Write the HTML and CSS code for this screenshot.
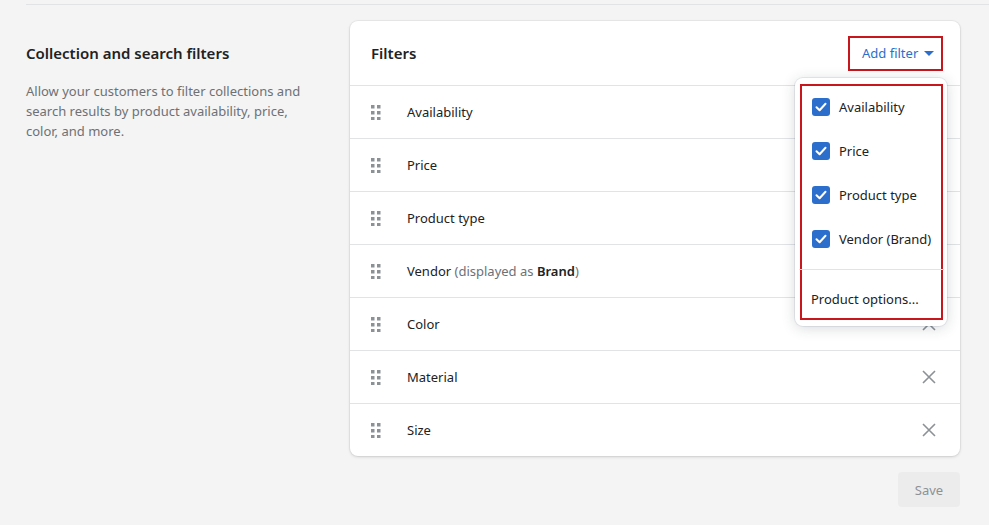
FILE: index.html
```html
<!DOCTYPE html>
<html lang="en">
<head>
<meta charset="utf-8">
<title>Collection and search filters</title>
<link rel="stylesheet" href="styles.css">
</head>
<body>
<div class="page">
  <div class="rule"></div>
  <div class="layout">
    <div class="intro">
      <h2 class="intro-title">Collection and search filters</h2>
      <p class="intro-text">Allow your customers to filter collections and search results by product availability, price, color, and more.</p>
    </div>
    <div class="main">
      <div class="card">
        <div class="card-header">
          <h3 class="card-title">Filters</h3>
          <button class="add-filter">Add filter <span class="caret"></span></button>
        </div>
        <ul class="rows">
          <li class="row"><span class="handle"><svg width="10" height="16" viewBox="0 0 10 16"><g fill="#8c9196"><rect x="0" y="1" width="3.5" height="3.5"/><rect x="6" y="1" width="3.5" height="3.5"/><rect x="0" y="7" width="3.5" height="3.5"/><rect x="6" y="7" width="3.5" height="3.5"/><rect x="0" y="13" width="3.5" height="3.5"/><rect x="6" y="13" width="3.5" height="3.5"/></g></svg></span><span class="label">Availability</span><span class="remove"><svg width="14" height="14" viewBox="0 0 14 14"><path d="M1 1L13 13M13 1L1 13" stroke="#8c9196" stroke-width="1.6" fill="none"/></svg></span></li>
          <li class="row"><span class="handle"><svg width="10" height="16" viewBox="0 0 10 16"><g fill="#8c9196"><rect x="0" y="1" width="3.5" height="3.5"/><rect x="6" y="1" width="3.5" height="3.5"/><rect x="0" y="7" width="3.5" height="3.5"/><rect x="6" y="7" width="3.5" height="3.5"/><rect x="0" y="13" width="3.5" height="3.5"/><rect x="6" y="13" width="3.5" height="3.5"/></g></svg></span><span class="label">Price</span><span class="remove"><svg width="14" height="14" viewBox="0 0 14 14"><path d="M1 1L13 13M13 1L1 13" stroke="#8c9196" stroke-width="1.6" fill="none"/></svg></span></li>
          <li class="row"><span class="handle"><svg width="10" height="16" viewBox="0 0 10 16"><g fill="#8c9196"><rect x="0" y="1" width="3.5" height="3.5"/><rect x="6" y="1" width="3.5" height="3.5"/><rect x="0" y="7" width="3.5" height="3.5"/><rect x="6" y="7" width="3.5" height="3.5"/><rect x="0" y="13" width="3.5" height="3.5"/><rect x="6" y="13" width="3.5" height="3.5"/></g></svg></span><span class="label">Product type</span><span class="remove"><svg width="14" height="14" viewBox="0 0 14 14"><path d="M1 1L13 13M13 1L1 13" stroke="#8c9196" stroke-width="1.6" fill="none"/></svg></span></li>
          <li class="row"><span class="handle"><svg width="10" height="16" viewBox="0 0 10 16"><g fill="#8c9196"><rect x="0" y="1" width="3.5" height="3.5"/><rect x="6" y="1" width="3.5" height="3.5"/><rect x="0" y="7" width="3.5" height="3.5"/><rect x="6" y="7" width="3.5" height="3.5"/><rect x="0" y="13" width="3.5" height="3.5"/><rect x="6" y="13" width="3.5" height="3.5"/></g></svg></span><span class="label">Vendor <span class="muted">(displayed as </span><strong class="strong">Brand</strong><span class="muted">)</span></span><span class="remove"><svg width="14" height="14" viewBox="0 0 14 14"><path d="M1 1L13 13M13 1L1 13" stroke="#8c9196" stroke-width="1.6" fill="none"/></svg></span></li>
          <li class="row"><span class="handle"><svg width="10" height="16" viewBox="0 0 10 16"><g fill="#8c9196"><rect x="0" y="1" width="3.5" height="3.5"/><rect x="6" y="1" width="3.5" height="3.5"/><rect x="0" y="7" width="3.5" height="3.5"/><rect x="6" y="7" width="3.5" height="3.5"/><rect x="0" y="13" width="3.5" height="3.5"/><rect x="6" y="13" width="3.5" height="3.5"/></g></svg></span><span class="label">Color</span><span class="remove"><svg width="14" height="14" viewBox="0 0 14 14"><path d="M1 1L13 13M13 1L1 13" stroke="#8c9196" stroke-width="1.6" fill="none"/></svg></span></li>
          <li class="row"><span class="handle"><svg width="10" height="16" viewBox="0 0 10 16"><g fill="#8c9196"><rect x="0" y="1" width="3.5" height="3.5"/><rect x="6" y="1" width="3.5" height="3.5"/><rect x="0" y="7" width="3.5" height="3.5"/><rect x="6" y="7" width="3.5" height="3.5"/><rect x="0" y="13" width="3.5" height="3.5"/><rect x="6" y="13" width="3.5" height="3.5"/></g></svg></span><span class="label">Material</span><span class="remove"><svg width="14" height="14" viewBox="0 0 14 14"><path d="M1 1L13 13M13 1L1 13" stroke="#8c9196" stroke-width="1.6" fill="none"/></svg></span></li>
          <li class="row"><span class="handle"><svg width="10" height="16" viewBox="0 0 10 16"><g fill="#8c9196"><rect x="0" y="1" width="3.5" height="3.5"/><rect x="6" y="1" width="3.5" height="3.5"/><rect x="0" y="7" width="3.5" height="3.5"/><rect x="6" y="7" width="3.5" height="3.5"/><rect x="0" y="13" width="3.5" height="3.5"/><rect x="6" y="13" width="3.5" height="3.5"/></g></svg></span><span class="label">Size</span><span class="remove"><svg width="14" height="14" viewBox="0 0 14 14"><path d="M1 1L13 13M13 1L1 13" stroke="#8c9196" stroke-width="1.6" fill="none"/></svg></span></li>
        </ul>
        <div class="popover">
          <div class="popover-box">
            <ul class="options">
              <li class="option"><span class="checkbox"><svg width="12" height="10" viewBox="0 0 12 10"><path d="M1.5 5.2L4.6 8.2L10.5 1.8" stroke="#fff" stroke-width="2" fill="none" stroke-linecap="round" stroke-linejoin="round"/></svg></span>Availability</li>
              <li class="option"><span class="checkbox"><svg width="12" height="10" viewBox="0 0 12 10"><path d="M1.5 5.2L4.6 8.2L10.5 1.8" stroke="#fff" stroke-width="2" fill="none" stroke-linecap="round" stroke-linejoin="round"/></svg></span>Price</li>
              <li class="option"><span class="checkbox"><svg width="12" height="10" viewBox="0 0 12 10"><path d="M1.5 5.2L4.6 8.2L10.5 1.8" stroke="#fff" stroke-width="2" fill="none" stroke-linecap="round" stroke-linejoin="round"/></svg></span>Product type</li>
              <li class="option"><span class="checkbox"><svg width="12" height="10" viewBox="0 0 12 10"><path d="M1.5 5.2L4.6 8.2L10.5 1.8" stroke="#fff" stroke-width="2" fill="none" stroke-linecap="round" stroke-linejoin="round"/></svg></span>Vendor (Brand)</li>
            </ul>
            <div class="popover-divider"></div>
            <div class="more">Product options...</div>
          </div>
        </div>
      </div>
      <div class="actions">
        <button class="save">Save</button>
      </div>
    </div>
  </div>
</div>
</body>
</html>
```

FILE: styles.css
```css
* { box-sizing: border-box; }
html, body {
  margin: 0;
  padding: 0;
  background: #f4f4f4;
  font-family: "Noto Sans", "Open Sans", "Liberation Sans", sans-serif;
  color: #202223;
}
.page {
  padding: 4px 0 0 26px;
}
.rule {
  height: 1px;
  background: #e1e3e5;
}
.layout {
  display: grid;
  grid-template-columns: 324px 610px;
  margin-top: 16px;
}
.intro {
  padding-top: 20px;
}
.intro-title {
  margin: 0;
  font-size: 15px;
  line-height: 24px;
  font-weight: 600;
  color: #202223;
}
.intro-text {
  margin: 16px 0 0;
  font-size: 13px;
  line-height: 20px;
  color: #6d7175;
  max-width: 290px;
}
.main {
  display: flex;
  flex-direction: column;
}
.card {
  position: relative;
  background: #fff;
  border-radius: 8px;
  box-shadow: 0 0 0 1px rgba(63,63,68,0.05), 0 1px 3px rgba(63,63,68,0.18);
}
.card-header {
  height: 64px;
  display: flex;
  align-items: center;
  justify-content: space-between;
  padding: 0 17px 0 21px;
}
.card-title {
  margin: 0;
  font-size: 15px;
  line-height: 24px;
  font-weight: 600;
}
.add-filter {
  width: 95px;
  height: 35px;
  border: 2px solid #c8161d;
  background: #fff;
  color: #2c6ecb;
  font-family: inherit;
  font-size: 13px;
  padding: 0 0 0 12px;
  display: flex;
  align-items: center;
  gap: 6px;
  margin-top: 0;
}
.caret {
  width: 0;
  height: 0;
  border-left: 5px solid transparent;
  border-right: 5px solid transparent;
  border-top: 5px solid #2c6ecb;
  margin-top: 1px;
}
.rows {
  list-style: none;
  margin: 0;
  padding: 0;
}
.row {
  height: 53px;
  border-top: 1px solid #e1e3e5;
  display: flex;
  align-items: center;
  padding: 0 24px 0 21px;
  font-size: 13px;
}
.handle {
  width: 36px;
  display: flex;
  align-items: center;
}
.handle svg { display: block; }
.label {
  flex: 1;
  color: #202223;
}
.muted { color: #6d7175; }
.strong { font-weight: 600; color: #202223; }
.remove {
  display: flex;
  align-items: center;
}
.remove svg { display: block; }
.popover {
  position: absolute;
  left: 445px;
  top: 57px;
  width: 152px;
  height: 248px;
  background: #fff;
  border-radius: 8px;
  box-shadow: 0 0 0 1px rgba(6,44,82,0.08), 0 2px 14px rgba(33,43,54,0.18);
  padding: 6px 4px 6px 5px;
}
.popover-box {
  height: 100%;
  border: 2px solid #c8161d;
  display: flex;
  flex-direction: column;
}
.options {
  list-style: none;
  margin: -1px 0 0;
  padding: 0 0 0 10px;
}
.option {
  height: 44px;
  display: flex;
  align-items: center;
  gap: 9px;
  font-size: 13px;
  color: #202223;
}
.checkbox {
  width: 18px;
  height: 18px;
  border-radius: 3px;
  background: #2c6ecb;
  display: flex;
  align-items: center;
  justify-content: center;
}
.checkbox svg { display: block; }
.popover-divider {
  height: 1px;
  background: #e1e3e5;
  margin: 8px -3px 0 -3px;
}
.more {
  padding: 19px 0 0 9px;
  font-size: 13px;
  line-height: 20px;
  color: #202223;
}
.actions {
  display: flex;
  justify-content: flex-end;
  margin-top: 16px;
}
.save {
  width: 62px;
  height: 35px;
  border: none;
  border-radius: 4px;
  background: #ececec;
  color: #8c9196;
  font-family: inherit;
  font-size: 13px;
}
```
